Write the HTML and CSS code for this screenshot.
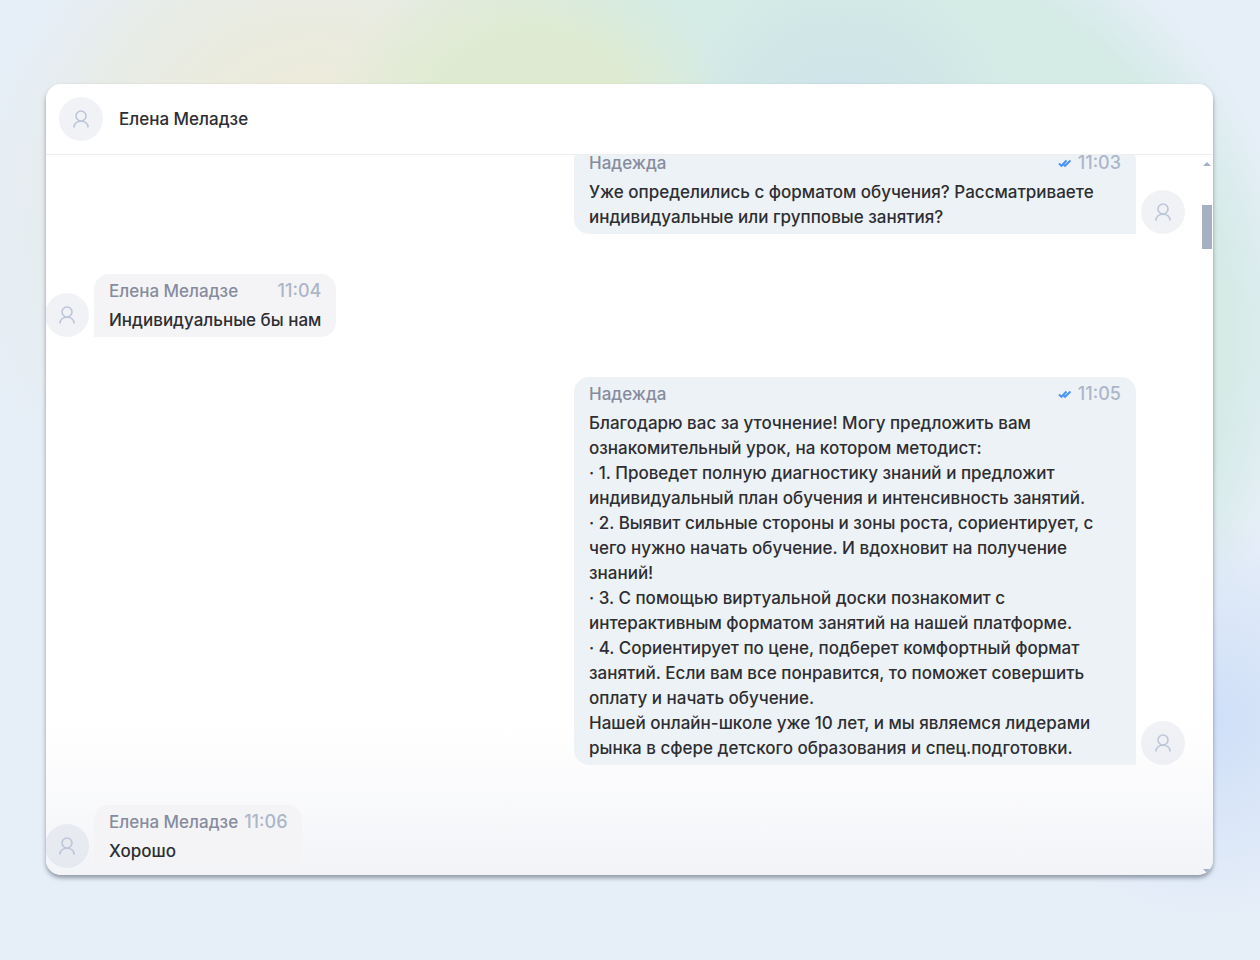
FILE: index.html
```html
<!DOCTYPE html>
<html lang="ru">
  <head>
    <meta charset="utf-8" />
    <meta name="viewport" content="width=device-width, initial-scale=1" />
    <title>Чат - Елена Меладзе</title>
    <link rel="stylesheet" href="styles.css">
  </head>
  <body>
    <svg width="0" height="0" class="sprite">
      <symbol id="user" viewBox="0 0 16 18">
        <circle cx="8" cy="6" r="5" />
        <path d="M1 17.5C1 13.5 4 11.2 8 11.2s7 2.3 7 6.3" />
      </symbol>
      <symbol id="checks" viewBox="0 0 14 10">
        <path d="M1 5.5l2.5 2.3L8.5 2.5M5.5 6.5L7 7.8l5.5-5.3" />
      </symbol>
    </svg>

    <main class="chat">
      <header class="chat-header">
        <span class="avatar"><svg class="user-icon"><use href="#user" /></svg></span>
        <h1>Елена Меладзе</h1>
      </header>

      <section class="messages">
        <div class="message outgoing">
          <div class="bubble">
            <div class="meta">
              <span class="author">Надежда</span>
              <svg class="checks"><use href="#checks" /></svg>
              <time>11:03</time>
            </div>
            <p>Уже определились с форматом обучения? Рассматриваете индивидуальные или групповые занятия?</p>
          </div>
          <span class="avatar"><svg class="user-icon"><use href="#user" /></svg></span>
        </div>

        <div class="message">
          <span class="avatar"><svg class="user-icon"><use href="#user" /></svg></span>
          <div class="bubble">
            <div class="meta">
              <span class="author">Елена Меладзе</span>
              <time>11:04</time>
            </div>
            <p>Индивидуальные бы нам</p>
          </div>
        </div>

        <div class="message outgoing">
          <div class="bubble">
            <div class="meta">
              <span class="author">Надежда</span>
              <svg class="checks"><use href="#checks" /></svg>
              <time>11:05</time>
            </div>
            <p>Благодарю вас за уточнение! Могу предложить вам ознакомительный урок, на котором методист:</p>
            <p>· 1. Проведет полную диагностику знаний и предложит индивидуальный план обучения и интенсивность занятий.</p>
            <p>· 2. Выявит сильные стороны и зоны роста, сориентирует, с чего нужно начать обучение. И вдохновит на получение знаний!</p>
            <p>· 3. С помощью виртуальной доски познакомит с интерактивным форматом занятий на нашей платформе.</p>
            <p>· 4. Сориентирует по цене, подберет комфортный формат занятий. Если вам все понравится, то поможет совершить оплату и начать обучение.</p>
            <p>Нашей онлайн-школе уже 10 лет, и мы являемся лидерами рынка в сфере детского образования и спец.подготовки.</p>
          </div>
          <span class="avatar"><svg class="user-icon"><use href="#user" /></svg></span>
        </div>

        <div class="message">
          <span class="avatar"><svg class="user-icon"><use href="#user" /></svg></span>
          <div class="bubble">
            <div class="meta">
              <span class="author">Елена Меладзе</span>
              <time>11:06</time>
            </div>
            <p>Хорошо</p>
          </div>
        </div>

        <div class="scrollbar">
          <span class="arrow-up"></span>
          <span class="thumb"></span>
          <span class="arrow-down"></span>
        </div>
      </section>
    </main>
  </body>
</html>
```
FILE: styles.css
```css
* {
  box-sizing: border-box;
}

body {
  display: flex;
  height: 100vh;
  margin: 0;
  padding: 84px 47px 85px 46px;
  font-family: Inter, "Liberation Sans", sans-serif;
  font-size: 17px;
  font-weight: 500;
  line-height: 25px;
  color: #2d2e32;
  background:
    radial-gradient(circle 170px at 67% 14%, #cbe1ea, rgba(203, 225, 234, 0)),
    radial-gradient(circle 200px at 96% 75%, #cfdff8, rgba(207, 223, 248, 0)),
    radial-gradient(ellipse 240px 220px at 42% 14%, #deebd2 45%, rgba(222, 235, 210, 0) 85%),
    radial-gradient(circle 300px at 25% 18%, #ecebdc 30%, rgba(236, 235, 220, 0)),
    radial-gradient(circle 360px at 25% 24%, #e5ece6 50%, rgba(229, 236, 230, 0)),
    radial-gradient(circle 460px at 67% 35%, #d5ebe6 84%, rgba(213, 235, 230, 0)),
    radial-gradient(ellipse 260px 180px at 50% 0, #d6eae5 50%, rgba(214, 234, 229, 0)),
    #e6eef8;
}

.sprite {
  position: absolute;
}

.chat {
  display: flex;
  flex-direction: column;
  flex: 1;
  overflow: hidden;
  border-radius: 15px;
  background: linear-gradient(to top, #f3f4f8, #fff 150px);
  box-shadow: 0 3px 4px rgba(60, 70, 85, 0.5);
}

.chat-header {
  display: flex;
  align-items: center;
  gap: 16px;
  height: 71px;
  padding: 0 13px;
  border-bottom: 1px solid #eeeff1;
}

.chat-header h1 {
  margin: 0;
  font-size: 17px;
  font-weight: 500;
}

.avatar {
  display: flex;
  align-items: center;
  justify-content: center;
  flex: none;
  width: 44px;
  height: 44px;
  border-radius: 50%;
  background: rgba(110, 130, 165, 0.1);
}

.user-icon {
  width: 16px;
  height: 18px;
  fill: none;
  stroke: #bcc6d8;
  stroke-width: 1.6;
}

.messages {
  position: relative;
  display: flex;
  flex-direction: column;
  justify-content: flex-end;
  flex: 1;
  gap: 40px;
  min-height: 0;
  overflow: hidden;
  padding: 0 28px 7px 0;
}

.message {
  display: flex;
  align-items: flex-end;
  gap: 5px;
  margin-left: -1px;
}

.outgoing {
  justify-content: flex-end;
}

.bubble {
  max-width: 562px;
  padding: 5px 15px 4px;
  border-radius: 15px 15px 15px 0;
  background: #f4f4f6;
}

.outgoing .bubble {
  border-radius: 15px 15px 0 15px;
  background: #edf2f6;
}

.bubble p {
  margin: 0;
}

.meta {
  display: flex;
  align-items: center;
  gap: 6px;
  margin-bottom: 5px;
  line-height: 24px;
}

.author {
  margin-right: auto;
  color: #868c9d;
}

.meta time {
  font-size: 18px;
  color: #acb6c9;
}

.checks {
  width: 14px;
  height: 10px;
  fill: none;
  stroke: #4a94fa;
  stroke-width: 2;
}

.scrollbar {
  position: absolute;
  top: 0;
  right: 1px;
  bottom: 0;
  display: flex;
  flex-direction: column;
  align-items: center;
  width: 10px;
  padding: 7px 0 2px;
}

.thumb {
  width: 10px;
  height: 44px;
  margin-top: 39px;
  background: #a6b0c4;
}

.arrow-up,
.arrow-down {
  border: 4px solid transparent;
}

.arrow-up {
  border-top: 0;
  border-bottom-color: #a6b0c4;
}

.arrow-down {
  margin-top: auto;
  border-bottom: 0;
  border-top-color: #a6b0c4;
}
```
